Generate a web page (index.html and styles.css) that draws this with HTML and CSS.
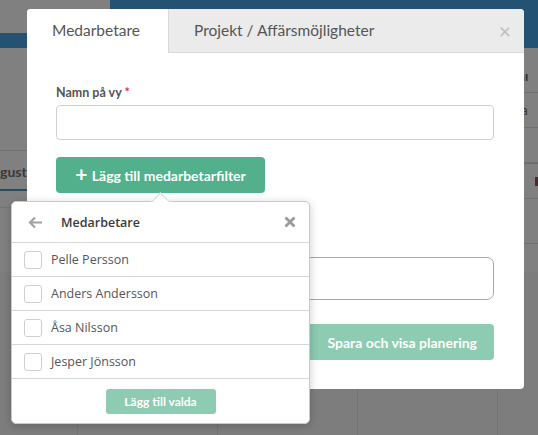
FILE: index.html
```html
<!DOCTYPE html>
<html>
<head>
    <meta charset="utf-8">
    <title>Ny vy</title>
    <link rel="stylesheet" href="styles.css">
</head>
<body>
    <!-- Dimmed app behind the dialog -->
    <div class="app">
        <div class="topbar">
            <div class="brand"><div class="brand-strip"></div></div>
            <div class="nav"></div>
        </div>
        <div class="sheet">
            <div class="side">
                <div class="side-gap"></div>
                <div class="side-month">gust</div>
                <div class="side-row"></div>
            </div>
            <div class="middle"></div>
            <div class="rightcol">
                <div class="rc-head">mı</div>
                <div class="rc-row">na</div>
                <div class="rc-row"></div>
                <div class="rc-mark"><span></span></div>
                <div class="rc-row tall"></div>
            </div>
        </div>
        <div class="week">
            <div class="day"></div>
            <div class="day"></div>
            <div class="day"></div>
            <div class="day"></div>
        </div>
    </div>

    <!-- Dialog -->
    <div class="modal">
        <div class="tabs">
            <div class="tab active">Medarbetare</div>
            <div class="tab">Projekt / Affärsmöjligheter</div>
            <div class="close">&times;</div>
        </div>
        <div class="modal-body">
            <label class="field-label">Namn på vy <span class="req">*</span></label>
            <input class="field-input" type="text">
            <button class="btn-add"><span class="plus">+</span> Lägg till medarbetarfilter</button>
            <div class="field-label hidden-label">Beskrivning</div>
            <div class="field-box"></div>
            <div class="actions">
                <button class="btn-save">Spara och visa planering</button>
            </div>
        </div>
    </div>

    <!-- Filter popover -->
    <div class="popover">
        <div class="pop-arrow"></div>
        <div class="pop-head">
            <svg class="pop-back" width="15" height="13" viewBox="0 0 15 13">
                <path d="M14 6.5H2.5M7 1.5L2 6.5L7 11.5" fill="none" stroke="#a3a3a3" stroke-width="2.2"/>
            </svg>
            <div class="pop-title">Medarbetare</div>
            <svg class="pop-close" width="12" height="12" viewBox="0 0 12 12">
                <path d="M1.5 1.5L10.5 10.5M10.5 1.5L1.5 10.5" stroke="#9a9a9a" stroke-width="2.8"/>
            </svg>
        </div>
        <div class="pop-row"><span class="check"></span>Pelle Persson</div>
        <div class="pop-row"><span class="check"></span>Anders Andersson</div>
        <div class="pop-row"><span class="check"></span>Åsa Nilsson</div>
        <div class="pop-row"><span class="check"></span>Jesper Jönsson</div>
        <div class="pop-foot">
            <button class="btn-pick">Lägg till valda</button>
        </div>
    </div>
</body>
</html>
```

FILE: styles.css
```css
html, body {
    margin: 0;
    padding: 0;
}

body {
    width: 538px;
    height: 435px;
    overflow: hidden;
    position: relative;
    background-color: #808080;
    font-family: Lato, 'Open Sans', sans-serif;
}

/* background app (already dimmed) */
.app {
    height: 435px;
    display: flex;
    flex-direction: column;
}

.topbar {
    display: flex;
    height: 48px;
}

.brand {
    width: 110px;
    display: flex;
    flex-direction: column;
    justify-content: flex-end;
}

.brand-strip {
    height: 15px;
    background-color: #235272;
}

.nav {
    flex: 1;
    background-color: #235272;
}

.sheet {
    display: flex;
    height: 224px;
}

.side {
    width: 110px;
    display: flex;
    flex-direction: column;
}

.side-gap {
    height: 102px;
    border-bottom: 1px solid #6f6f6f;
}

.side-month {
    height: 38px;
    line-height: 42px;
    font-size: 14px;
    font-weight: bold;
    color: #3a3a3a;
    border-bottom: 2px solid #274d66;
}

.side-row {
    height: 16px;
    border-bottom: 1px solid #747474;
}

.middle {
    flex: 1;
}

.rightcol {
    width: 24px;
    display: flex;
    flex-direction: column;
}

.rc-head {
    height: 44px;
    line-height: 56px;
    font-size: 13px;
    font-weight: bold;
    color: #2f2f2f;
    border-bottom: 1px solid #6f6f6f;
}

.rc-row {
    height: 34px;
    line-height: 34px;
    font-size: 13px;
    color: #333;
    border-bottom: 1px solid #707070;
}

.rc-row.tall {
    height: 44px;
}

.rc-mark {
    height: 34px;
    display: flex;
    align-items: center;
    justify-content: flex-end;
    border-top: 1px solid #6a6a6a;
    border-bottom: 1px solid #707070;
}

.rc-mark span {
    width: 3px;
    height: 9px;
    background-color: #4a2a2e;
}

.week {
    flex: 1;
    display: flex;
    padding-left: 77px;
    background-color: #7d7d7d;
    overflow: hidden;
}

.day {
    width: 139px;
    border-left: 1px solid #747474;
    flex-shrink: 0;
}

.day:last-child {
    width: 40px;
}

/* dialog */
.modal {
    position: absolute;
    left: 27px;
    top: 9px;
    width: 497px;
    height: 380px;
    background-color: #fff;
    border-radius: 4px;
    overflow: hidden;
}

.tabs {
    display: flex;
    align-items: stretch;
    height: 43px;
    background-color: #ebebeb;
    border-bottom: 1px solid #d9d9d9;
}

.tab {
    padding: 0 27px 0 25px;
    line-height: 43px;
    font-size: 15.5px;
    color: #555;
}

.tab.active {
    width: 89px;
    background-color: #fff;
    margin-bottom: -1px;
    border-right: 1px solid #d9d9d9;
}

.close {
    margin-left: auto;
    padding-right: 13px;
    line-height: 43px;
    font-size: 21px;
    color: #bdbdbd;
}

.modal-body {
    padding: 31px 30px 0 29px;
    display: flex;
    flex-direction: column;
    align-items: flex-start;
}

.field-label {
    font-size: 12.5px;
    font-weight: bold;
    color: #555;
    line-height: 17px;
    margin-bottom: 4px;
}

.req {
    color: #e0306a;
}

.field-input {
    box-sizing: border-box;
    width: 100%;
    height: 35px;
    margin: 0;
    border: 1px solid #cfcfcf;
    border-radius: 4px;
    outline: none;
}

.btn-add {
    margin-top: 17px;
    height: 36px;
    width: 209px;
    padding: 0;
    border: none;
    border-radius: 4px;
    background-color: #52b08d;
    color: #fff;
    font-family: Lato, sans-serif;
    font-size: 14px;
    font-weight: bold;
}

.plus {
    font-size: 21px;
    line-height: 13px;
    position: relative;
    top: 1px;
    margin-right: 1px;
}

.hidden-label {
    margin-top: 43px;
    visibility: hidden;
}

.field-box {
    box-sizing: border-box;
    width: 100%;
    height: 43px;
    border: 1px solid #a9a9a9;
    border-radius: 7px;
}

.actions {
    align-self: stretch;
    display: flex;
    justify-content: flex-end;
    margin-top: 24px;
}

.btn-save {
    height: 36px;
    width: 188px;
    border: none;
    border-radius: 4px;
    background-color: #8dcbb2;
    color: #fff;
    font-family: Lato, sans-serif;
    font-size: 14px;
    font-weight: bold;
    text-align: right;
    padding-right: 17px;
}

/* popover */
.popover {
    position: absolute;
    left: 11px;
    top: 201px;
    width: 297px;
    height: 221px;
    background-color: #fff;
    border: 1px solid #c9c9c9;
    border-radius: 5px;
    box-shadow: 0 2px 10px rgba(0, 0, 0, 0.2);
    font-family: 'Open Sans', sans-serif;
}

.pop-arrow {
    position: absolute;
    left: 142px;
    top: -7px;
    width: 12px;
    height: 12px;
    background-color: #fff;
    border-left: 1px solid #d6d6d6;
    border-top: 1px solid #d6d6d6;
    transform: rotate(45deg);
}

.pop-head {
    display: flex;
    align-items: center;
    height: 40px;
    border-bottom: 1px solid #d6d6d6;
    padding: 0 13px 0 16px;
}

.pop-back {
    margin-right: 18px;
}

.pop-title {
    flex: 1;
    font-size: 12.5px;
    font-weight: 600;
    color: #3a3a3a;
}

.pop-row {
    display: flex;
    align-items: center;
    height: 33px;
    border-bottom: 1px solid #d6d6d6;
    padding-left: 12px;
    font-size: 12.5px;
    color: #555;
}

.check {
    box-sizing: border-box;
    width: 18px;
    height: 18px;
    border: 1px solid #cfcfcf;
    border-radius: 3px;
    margin-right: 9px;
}

.pop-foot {
    display: flex;
    justify-content: center;
    padding-top: 10px;
}

.btn-pick {
    width: 110px;
    height: 25px;
    border: none;
    border-radius: 3px;
    background-color: #8dcbb2;
    color: #fff;
    font-family: Lato, sans-serif;
    font-size: 12px;
    font-weight: bold;
    padding: 0;
}
```
